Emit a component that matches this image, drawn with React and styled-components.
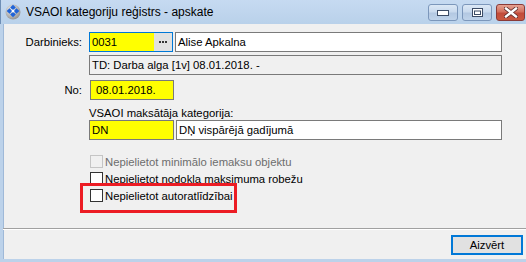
import React from "react"
import styled, { createGlobalStyle } from "styled-components"

const GlobalStyle = createGlobalStyle`
  html, body {
    margin: 0;
    padding: 0;
    background: #f0f0f0;
  }
  body {
    font-family: "Liberation Sans", Arial, sans-serif;
    font-size: 11.3px;
    color: #000;
  }
`

const Window = styled.div`
  position: relative;
  display: flex;
  flex-direction: column;
  width: 526px;
  height: 262px;
  overflow: hidden;
`

const TitleBar = styled.div`
  display: flex;
  align-items: center;
  height: 24px;
  padding-left: 4px;
  background: linear-gradient(#c6daf1, #b9d1ea);
  border-left: 1px solid #6f8fb6;
  font-size: 12px;
  color: #000;

  .title {
    margin-left: 5px;
    flex: 1;
  }
`

const CaptionButtons = styled.div`
  display: flex;
  gap: 4px;
  align-self: flex-start;
  margin-top: 4px;
  margin-right: 1px;
`

const CaptionButton = styled.div`
  display: flex;
  align-items: center;
  justify-content: center;
  width: ${props => (props.close ? "29px" : "30px")};
  height: 17px;
  box-sizing: border-box;
  border: 1px solid ${props => (props.close ? "#8a3a38" : "#7c97bb")};
  border-radius: 3px;
  background: ${props =>
    props.close
      ? "linear-gradient(#e5a293, #d3705e 45%, #c24b3a 55%, #c9573f)"
      : "linear-gradient(#dce8f5, #c9daee 45%, #b3c8e2 55%, #bfd3ea)"};
`

const Client = styled.div`
  flex: 1;
  display: flex;
  flex-direction: column;
  background: #f0f0f0;
  border-left: 3px solid #bcd2ea;
  box-shadow: inset 1px 0 0 #9fb9d8;
  border-bottom: 3px solid #bcd2ea;
`

const Form = styled.div`
  display: grid;
  grid-template-columns: 79px 413px;
  column-gap: 7px;
  row-gap: 3px;
  padding-top: 8px;
  align-items: center;
  flex: 1;
  align-content: start;
`

const Label = styled.div`
  text-align: right;
`

const FieldRow = styled.div`
  display: flex;
  gap: 2px;
  margin-top: ${props => props.mt || 0}px;
  margin-left: ${props => props.ml || 0}px;
`

const Field = styled.div`
  box-sizing: border-box;
  height: 20px;
  width: ${props => (props.w ? props.w + "px" : "auto")};
  flex: ${props => (props.w ? "none" : 1)};
  display: flex;
  align-items: center;
  padding-left: ${props => props.pl || 2}px;
  border: 1px solid ${props => (props.focused ? "#0078d7" : "#7a7a7a")};
  background: ${props =>
    props.yellow ? "#ffff00" : props.disabled ? "#f0f0f0" : "#ffffff"};
  white-space: nowrap;
  overflow: hidden;
`

const LookupBox = styled.div`
  box-sizing: border-box;
  display: flex;
  width: 84px;
  height: 20px;
  border: 1px solid #0078d7;

  .code {
    flex: 1;
    background: #ffff00;
    padding-left: 2px;
    display: flex;
    align-items: center;
  }

  .dots {
    width: 18px;
    background: #e1e1e1;
    display: flex;
    align-items: center;
    justify-content: center;
    gap: 1px;
  }

  .dots i {
    width: 2px;
    height: 2px;
    background: #333;
  }
`

const SubLabel = styled.div`
  margin-top: 4px;
  margin-bottom: -2px;
`

const Checks = styled.div`
  grid-column: 2;
  display: flex;
  flex-direction: column;
  margin-top: 12px;
  margin-left: 1px;
`

const CheckRow = styled.label`
  display: flex;
  align-items: center;
  gap: 2px;
  height: 13px;
  margin-bottom: 4px;
  color: ${props => (props.disabled ? "#6d6d6d" : "#000")};
`

const Box = styled.span`
  box-sizing: border-box;
  width: 13px;
  height: 13px;
  border: 1px solid ${props => (props.disabled ? "#c5c5c5" : "#333")};
  background: ${props => (props.disabled ? "#f0f0f0" : "#fff")};
`

const Footer = styled.div`
  display: flex;
  justify-content: flex-end;
  border-top: 1px solid #a0a0a0;
  box-shadow: inset 0 1px 0 #ffffff;
  padding: 6px 3px 4px 0;
`

const Button = styled.div`
  box-sizing: border-box;
  width: 72px;
  height: 20px;
  display: flex;
  align-items: center;
  justify-content: center;
  background: #e1e1e1;
  border: 2px solid #0078d7;
`

const Highlight = styled.div`
  position: absolute;
  left: 80px;
  top: 183px;
  width: 157px;
  height: 30px;
  box-sizing: border-box;
  border: 3px solid #ec1c24;
`

const AppIcon = () => (
  <svg width="16" height="16" viewBox="0 0 16 16">
    <defs>
      <radialGradient id="g" cx="0.4" cy="0.35" r="0.7">
        <stop offset="0" stopColor="#f4f4f4" />
        <stop offset="1" stopColor="#8e8e8e" />
      </radialGradient>
    </defs>
    <circle cx="8" cy="8" r="7.5" fill="url(#g)" />
    <g fill="#1f63d8">
      <rect x="6" y="1.5" width="4" height="4" transform="rotate(45 8 3.5)" />
      <rect x="2.5" y="5" width="4" height="4" transform="rotate(45 4.5 7)" />
      <rect x="9.5" y="5" width="4" height="4" transform="rotate(45 11.5 7)" />
      <rect x="6" y="8.5" width="4" height="4" transform="rotate(45 8 10.5)" />
    </g>
    <g fill="#ffffff">
      <rect x="6.8" y="5.8" width="2.4" height="2.4" transform="rotate(45 8 7)" />
    </g>
  </svg>
)

const App = () => (
  <>
    <GlobalStyle />
    <Window>
      <TitleBar>
        <AppIcon />
        <span className="title">VSAOI kategoriju reģistrs - apskate</span>
        <CaptionButtons>
          <CaptionButton>
            <svg width="12" height="6" viewBox="0 0 12 6">
              <rect x="0.5" y="0.5" width="11" height="5" fill="#fff" stroke="#3c4c66" />
            </svg>
          </CaptionButton>
          <CaptionButton>
            <svg width="11" height="9" viewBox="0 0 11 9">
              <rect x="0.5" y="0.5" width="10" height="8" fill="#fff" stroke="#3c4c66" />
              <rect x="2.5" y="3" width="6" height="3.5" fill="none" stroke="#3c4c66" />
            </svg>
          </CaptionButton>
          <CaptionButton close>
            <svg width="14" height="11" viewBox="0 0 14 11">
              <path d="M2 1.5 L12 9.5 M12 1.5 L2 9.5" stroke="#5a2a2a" strokeWidth="4" strokeLinecap="square" />
              <path d="M2 1.5 L12 9.5 M12 1.5 L2 9.5" stroke="#ffffff" strokeWidth="2.4" strokeLinecap="square" />
            </svg>
          </CaptionButton>
        </CaptionButtons>
      </TitleBar>
      <Client>
        <Form>
          <Label>Darbinieks:</Label>
          <FieldRow>
            <LookupBox>
              <div className="code">0031</div>
              <div className="dots"><i /><i /><i /></div>
            </LookupBox>
            <Field>Alise Apkalna</Field>
          </FieldRow>

          <div />
          <Field disabled>TD: Darba alga [1v] 08.01.2018. -</Field>

          <Label style={{ marginTop: 2 }}>No:</Label>
          <FieldRow mt={2} ml={1}>
            <Field w={84} yellow pl={5}>08.01.2018.</Field>
          </FieldRow>

          <div />
          <SubLabel>VSAOI maksātāja kategorija:</SubLabel>

          <div />
          <FieldRow>
            <Field w={85} yellow>DN</Field>
            <Field>DŅ vispārējā gadījumā</Field>
          </FieldRow>

          <Checks>
            <CheckRow disabled>
              <Box disabled />
              Nepielietot minimālo iemaksu objektu
            </CheckRow>
            <CheckRow>
              <Box />
              Nepielietot nodokļa maksimuma robežu
            </CheckRow>
            <CheckRow>
              <Box />
              Nepielietot autoratlīdzībai
            </CheckRow>
          </Checks>
        </Form>
        <Footer>
          <Button>Aizvērt</Button>
        </Footer>
      </Client>
      <Highlight />
    </Window>
  </>
)

export default App
